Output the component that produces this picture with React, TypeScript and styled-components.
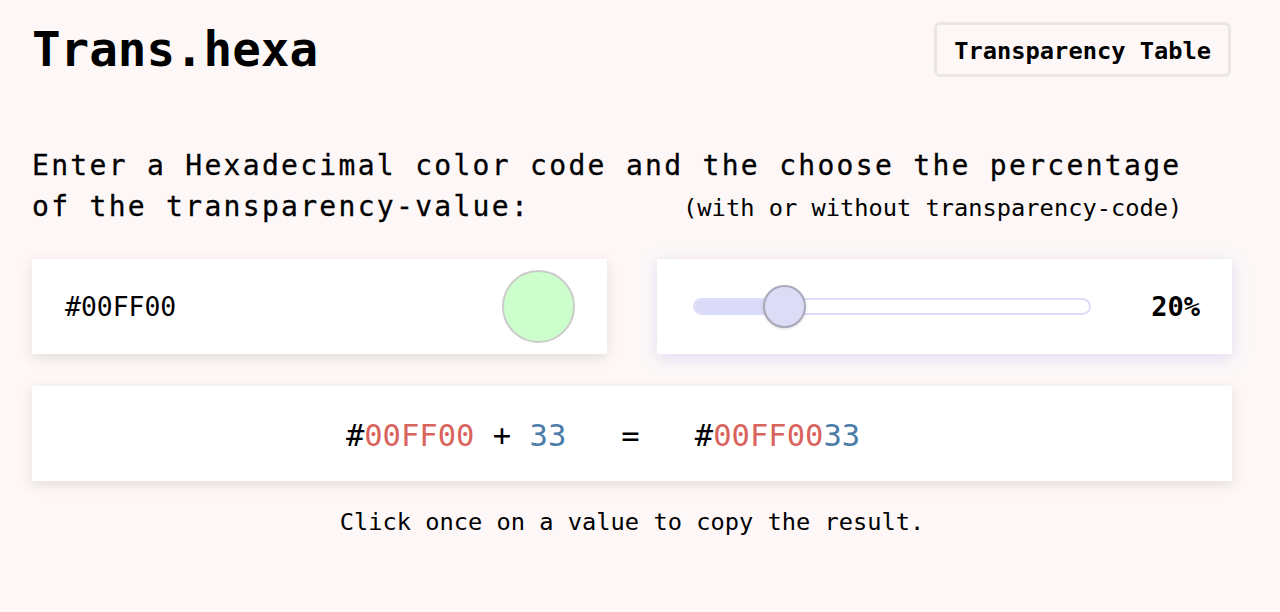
import React from "react";
import styled, { createGlobalStyle } from "styled-components";

const GlobalStyle = createGlobalStyle`
  html, body {
    margin: 0;
    padding: 0;
    background-color: #fdf8f7;
  }
  body {
    font-family: "DejaVu Sans Mono", "Liberation Mono", monospace;
    color: #000;
  }
`;

const Page = styled.div`
  width: 1200px;
  padding: 22px 0 40px 32px;
`;

const Header = styled.header`
  display: flex;
  flex-direction: row;
  justify-content: space-between;
  align-items: center;
  height: 55px;
`;

const Logo = styled.h1`
  margin: 0;
  font-size: 47.5px;
  font-weight: 700;
  line-height: 55px;
`;

const TableBtn = styled.button`
  font-family: inherit;
  font-size: 23.7px;
  font-weight: 700;
  line-height: 28px;
  color: #000;
  background: transparent;
  border: 3px solid #ebe6e5;
  border-radius: 6px;
  padding: 12px 17px 9px;
  margin-right: 1px;
  cursor: pointer;
`;

const Intro = styled.p`
  margin: 68px 0 0;
  font-size: 28px;
  letter-spacing: 2.3px;
  line-height: 41px;
  -webkit-text-stroke: 0.3px #000;
`;

const IntroNote = styled.span`
  display: inline-block;
  font-size: 23.7px;
  letter-spacing: 0;
  margin-left: 153px;
  -webkit-text-stroke: 0;
`;

const CardRow = styled.div`
  display: grid;
  grid-template-columns: 1fr 1fr;
  column-gap: 50px;
  margin-top: 30px;
`;

const Card = styled.div<{ $focus?: boolean }>`
  display: flex;
  flex-direction: row;
  align-items: center;
  justify-content: space-between;
  height: 95px;
  box-sizing: border-box;
  background-color: #fff;
  box-shadow: ${(props) =>
    props.$focus
      ? "0 4px 16px rgba(125, 115, 235, 0.22)"
      : "0 4px 12px rgba(60, 40, 40, 0.13)"};
`;

const ColorCard = styled(Card)`
  padding: 0 32px 0 33px;
`;

const HexText = styled.span`
  font-size: 26.4px;
`;

const Swatch = styled.div<{ $color: string }>`
  width: 73px;
  height: 73px;
  box-sizing: border-box;
  border-radius: 50%;
  border: 2px solid #cbcbcb;
  background-color: ${(props) => props.$color};
`;

const SliderCard = styled(Card)`
  padding: 0 32px 0 36px;
`;

const Track = styled.div`
  position: relative;
  width: 398px;
  height: 17px;
  box-sizing: border-box;
  border: 2px solid #dcdcfb;
  border-radius: 9px;
  background-color: #fff;
`;

const TrackFill = styled.div`
  height: 100%;
  border-radius: 8px 0 0 8px;
  background-color: #dadaf8;
`;

const Thumb = styled.div`
  position: absolute;
  top: 50%;
  width: 43px;
  height: 43px;
  box-sizing: border-box;
  margin-left: -21.5px;
  margin-top: -21.5px;
  border-radius: 50%;
  border: 2px solid #a9a9ba;
  background-color: #dcdcf6;
  box-shadow: 0 1px 3px rgba(0, 0, 0, 0.15);
`;

const Percent = styled.span`
  font-size: 27px;
  font-weight: 700;
`;

const ResultCard = styled(Card)`
  justify-content: center;
  margin-top: 32px;
  padding: 3px 58px 0 0;
`;

const Result = styled.div`
  font-size: 30.5px;
  white-space: pre;
`;

const Part = styled.span<{ $tone?: "hex" | "alpha" }>`
  color: ${(props) =>
    props.$tone === "hex" ? "#d9635d" : props.$tone === "alpha" ? "#4b7ba7" : "#000"};
  cursor: pointer;
`;

const Hint = styled.p`
  margin: 27px 0 0;
  text-align: center;
  font-size: 23.7px;
  line-height: 28px;
`;

const App = () => {
  const hex = "00FF00";
  const percent = 20;
  const alpha = Math.round((percent / 100) * 255)
    .toString(16)
    .toUpperCase()
    .padStart(2, "0");

  // thumb center on a 398px track with 43px thumb
  const thumbLeft = 21.5 + (percent / 100) * (398 - 4 - 43) - 2;

  return (
    <>
      <GlobalStyle />
      <Page>
        <Header>
          <Logo>Trans.hexa</Logo>
          <TableBtn>Transparency Table</TableBtn>
        </Header>
        <Intro>
          Enter a Hexadecimal color code and the choose the percentage of the
          transparency-value:
          <IntroNote>(with or without transparency-code)</IntroNote>
        </Intro>
        <CardRow>
          <ColorCard>
            <HexText>#{hex}</HexText>
            <Swatch $color="#ccffcc" />
          </ColorCard>
          <SliderCard $focus>
            <Track>
              <TrackFill style={{ width: thumbLeft + 4 }} />
              <Thumb style={{ left: thumbLeft }} />
            </Track>
            <Percent>{percent}%</Percent>
          </SliderCard>
        </CardRow>
        <ResultCard>
          <Result>
            <Part>#</Part>
            <Part $tone="hex">{hex}</Part>
            <Part> + </Part>
            <Part $tone="alpha">{alpha}</Part>
            <Part>{"   =   "}</Part>
            <Part>#</Part>
            <Part $tone="hex">{hex}</Part>
            <Part $tone="alpha">{alpha}</Part>
          </Result>
        </ResultCard>
        <Hint>Click once on a value to copy the result.</Hint>
      </Page>
    </>
  );
};

export default App;
